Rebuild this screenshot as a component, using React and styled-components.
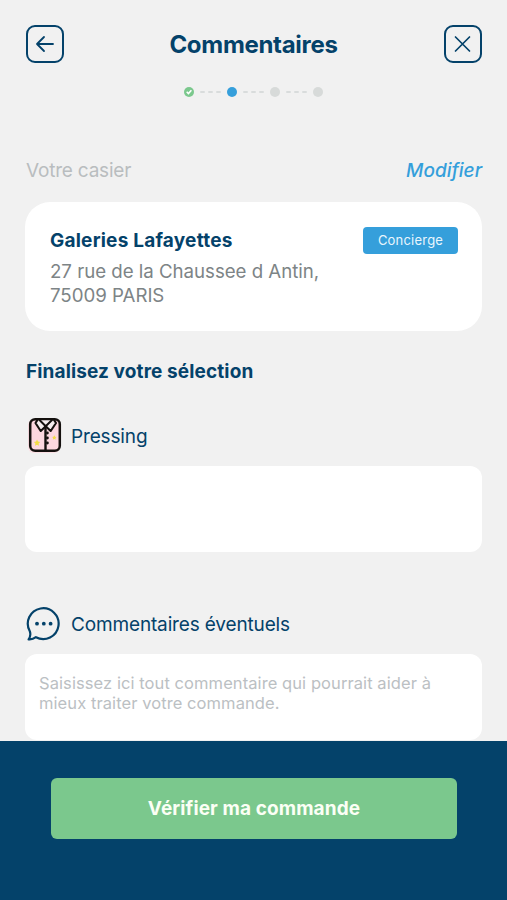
import React from "react";
import styled, { createGlobalStyle } from "styled-components";

const NAVY = "#04426a";
const BLUE = "#359fdb";
const GREEN = "#7bc88d";

const GlobalStyle = createGlobalStyle`
  * {
    box-sizing: border-box;
  }
  body {
    margin: 0;
    background: #f1f1f1;
    font-family: Inter, "Liberation Sans", sans-serif;
  }
`;

const Screen = styled.div`
  width: 507px;
  height: 900px;
  display: flex;
  flex-direction: column;
  overflow: hidden;
`;

const Content = styled.main`
  height: 741px;
  padding: 25px 25px 0;
  overflow: hidden;
`;

const Header = styled.header`
  height: 38px;
  padding: 0 0 0 1px;
  display: flex;
  align-items: center;
  justify-content: space-between;
`;

const Title = styled.h1`
  margin: 0 1px 0 0;
  padding-top: 1px;
  color: ${NAVY};
  font-size: 24px;
  font-weight: 700;
  line-height: 38px;
  letter-spacing: -0.3px;
`;

const IconButton = styled.button`
  width: 38px;
  height: 38px;
  padding: 0;
  border: 2px solid ${NAVY};
  border-radius: 9px;
  background: transparent;
  display: flex;
  align-items: center;
  justify-content: center;
`;

const Steps = styled.div`
  height: 12px;
  margin-top: 23px;
  display: flex;
  align-items: center;
  justify-content: center;
`;

const Step = styled.span`
  width: 10px;
  height: 10px;
  border-radius: 50%;
  background: ${props => props.$color};
  display: flex;
  align-items: center;
  justify-content: center;
`;

const Dashes = styled.span`
  width: 33px;
  display: flex;
  justify-content: center;
  gap: 3px;
  i {
    width: 5px;
    height: 2px;
    border-radius: 1px;
    background: #d9dcdc;
  }
`;

const SectionRow = styled.div`
  height: 24px;
  margin-top: 60px;
  padding-left: 1px;
  display: flex;
  align-items: center;
  justify-content: space-between;
`;

const Label = styled.span`
  color: #b9bdbf;
  font-size: 19px;
  letter-spacing: -0.2px;
`;

const EditLink = styled.a`
  color: ${BLUE};
  font-size: 19px;
  font-style: italic;
  font-weight: 500;
`;

const LockerCard = styled.section`
  height: 129px;
  margin-top: 20px;
  padding: 24px 24px 0 25px;
  border-radius: 25px;
  background: #fff;
`;

const CardTop = styled.div`
  height: 28px;
  display: flex;
  align-items: center;
  justify-content: space-between;
`;

const Place = styled.strong`
  color: ${NAVY};
  font-size: 19px;
  font-weight: 700;
  letter-spacing: 0.22px;
`;

const Badge = styled.span`
  width: 95px;
  height: 27px;
  border-radius: 4px;
  background: ${BLUE};
  color: #e9f6fd;
  font-size: 13px;
  line-height: 27px;
  letter-spacing: 0.2px;
  text-align: center;
`;

const Address = styled.p`
  margin: 6px 0 0;
  color: #7d8486;
  font-size: 18.7px;
  line-height: 24px;
  letter-spacing: -0.03px;
`;

const Heading = styled.h2`
  margin: 29px 0 0 1px;
  color: ${NAVY};
  font-size: 19px;
  font-weight: 700;
  line-height: 24px;
  letter-spacing: 0.12px;
`;

const GroupTitle = styled.div`
  height: 38px;
  margin-top: ${props => props.$top}px;
  display: flex;
  align-items: center;
  gap: 8px;
  color: ${NAVY};
  font-size: 19px;
  svg {
    flex: none;
  }
`;

const GroupLabel = styled.span`
  letter-spacing: -0.15px;
`;

const Field = styled.div`
  height: 86px;
  margin-top: 11px;
  padding: 20px 14px;
  border-radius: 12px;
  background: #fff;
  color: #bbc0c3;
  font-size: 16.5px;
  line-height: 19.5px;
  letter-spacing: 0.08px;
`;

const Footer = styled.footer`
  height: 159px;
  padding: 37px 50px 0 51px;
  background: ${NAVY};
`;

const SubmitButton = styled.button`
  width: 100%;
  height: 61px;
  padding: 0;
  border: 0;
  border-radius: 6px;
  background: ${GREEN};
  color: #fbfff5;
  font-family: inherit;
  font-size: 19px;
  font-weight: 700;
  letter-spacing: 0.1px;
`;

const ArrowIcon = () => (
  <svg width="20" height="18" viewBox="0 0 20 18" fill="none" stroke={NAVY} strokeWidth="1.8" strokeLinecap="round" strokeLinejoin="round">
    <path d="M18 9H2M9 2L2 9l7 7" />
  </svg>
);

const CloseIcon = () => (
  <svg width="18" height="18" viewBox="0 0 18 18" fill="none" stroke={NAVY} strokeWidth="1.7" strokeLinecap="round">
    <path d="M1.500 2l14 14M15.500 2l-14 14" />
  </svg>
);

const CheckIcon = () => (
  <svg width="10" height="10" viewBox="0 0 10 10" fill="none" stroke="#fff" strokeWidth="1.6">
    <path d="M2.700 4.800l1.700 1.700 3-3.200" />
  </svg>
);

const ShirtIcon = () => (
  <svg width="38" height="38" viewBox="0 0 38 38" fill="none" strokeLinejoin="round" strokeLinecap="round">
    <rect x="3" y="2" width="32" height="34" rx="6" fill="#fbdfe4" />
    <rect x="5.200" y="2.200" width="29.600" height="31.600" rx="5" fill="#fcd7df" stroke="#15110f" strokeWidth="2.500" />
    <path d="M13 2.200L10.500 6l5.200 8 5-4.800 5 4.800 5.300-8-2.500-3.800z" fill="#f6eef0" stroke="#15110f" strokeWidth="2.100" />
    <path d="M14.500 3l6.200 6.200L27 3" stroke="#15110f" strokeWidth="2" />
    <path d="M20.500 10v23" stroke="#15110f" strokeWidth="2.400" />
    <g fill="#15110f">
      <circle cx="22.400" cy="16" r="1.400" />
      <circle cx="22.400" cy="21" r="1.400" />
      <circle cx="22.400" cy="26" r="1.400" />
    </g>
    <path d="M12 22.600l1 2 2.200.400-1.600 1.500.300 2.200-1.900-1-2 1 .400-2.200L8.900 25l2.200-.400z" fill="#f2dc45" />
    <path d="M29.300 18.300l.7 1.400 1.500.300-1.100 1.100.300 1.500-1.400-.700-1.400.700.300-1.500-1.100-1.100 1.500-.300z" fill="#f2dc45" />
  </svg>
);

const ChatIcon = () => (
  <svg width="38" height="38" viewBox="-0.300 0.300 38 38" fill="none">
    <path d="M4.500 26.500A15.400 15.400 0 1 1 10.600 32.500C8.300 34.200 5.700 34.900 3.300 34.600C4.900 32.500 5.500 29.500 4.500 26.500z" stroke={NAVY} strokeWidth="2.200" strokeLinejoin="round" />
    <g fill={NAVY}>
      <circle cx="11.700" cy="19" r="1.900" />
      <circle cx="18.500" cy="19" r="1.900" />
      <circle cx="25.300" cy="19" r="1.900" />
    </g>
  </svg>
);

const StepDashes = () => (
  <Dashes>
    <i />
    <i />
    <i />
  </Dashes>
);

export default () => (
  <Screen>
    <GlobalStyle />
    <Content>
      <Header>
        <IconButton aria-label="Retour">
          <ArrowIcon />
        </IconButton>
        <Title>Commentaires</Title>
        <IconButton aria-label="Fermer">
          <CloseIcon />
        </IconButton>
      </Header>
      <Steps>
        <Step $color={GREEN}>
          <CheckIcon />
        </Step>
        <StepDashes />
        <Step $color={BLUE} />
        <StepDashes />
        <Step $color="#d7dad9" />
        <StepDashes />
        <Step $color="#d7dad9" />
      </Steps>
      <SectionRow>
        <Label>Votre casier</Label>
        <EditLink>Modifier</EditLink>
      </SectionRow>
      <LockerCard>
        <CardTop>
          <Place>Galeries Lafayettes</Place>
          <Badge>Concierge</Badge>
        </CardTop>
        <Address>
          27 rue de la Chaussee d Antin,
          <br />
          75009 PARIS
        </Address>
      </LockerCard>
      <Heading>Finalisez votre sélection</Heading>
      <GroupTitle $top={33}>
        <ShirtIcon />
        <GroupLabel>Pressing</GroupLabel>
      </GroupTitle>
      <Field />
      <GroupTitle $top={53}>
        <ChatIcon />
        <GroupLabel>Commentaires éventuels</GroupLabel>
      </GroupTitle>
      <Field>
        Saisissez ici tout commentaire qui pourrait aider à mieux traiter votre
        commande.
      </Field>
    </Content>
    <Footer>
      <SubmitButton>Vérifier ma commande</SubmitButton>
    </Footer>
  </Screen>
);
